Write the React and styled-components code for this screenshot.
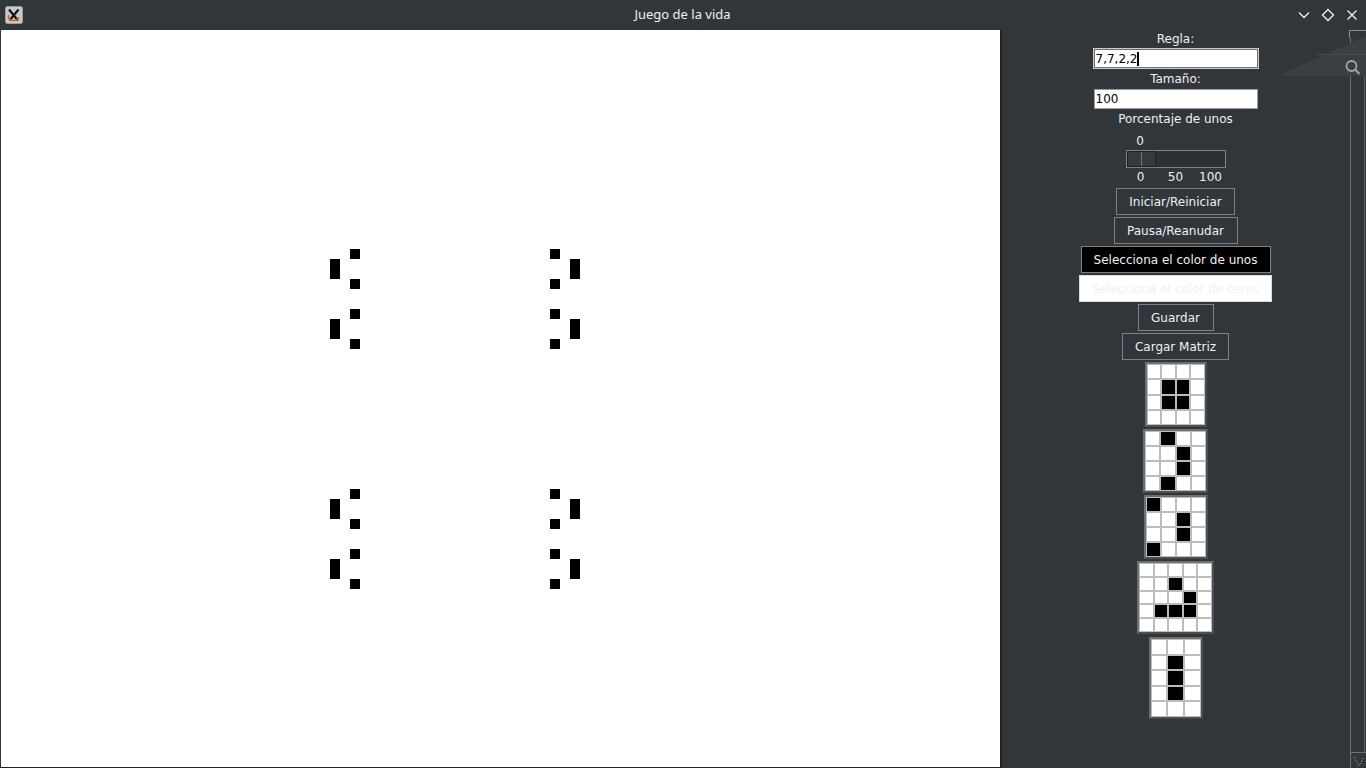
import React from 'react';
import styled, { createGlobalStyle } from 'styled-components';

const GlobalStyle = createGlobalStyle`
  html, body { margin: 0; padding: 0; background: #31363b; overflow: hidden; }
  #root { width: 1366px; height: 768px; }
`;

const Window = styled.div`
  width: 1366px;
  height: 768px;
  display: flex;
  flex-direction: column;
  background: #31363b;
`;

const TitleBar = styled.div`
  height: 30px;
  display: grid;
  grid-template-columns: 1fr auto 1fr;
  align-items: center;
  padding: 0 6px 1px 5px;
  box-sizing: border-box;
`;

const Title = styled.div`
  font-family: "Noto Sans", sans-serif;
  font-size: 13px;
  line-height: 16px;
  margin-bottom: 2px;
  color: #eff0f1;
`;

const Controls = styled.div`
  display: flex;
  justify-content: flex-end;
  gap: 8px;
`;

const CtrlBtn = styled.div`
  width: 16px;
  height: 16px;
  display: flex;
  align-items: center;
  justify-content: center;
`;

const Body = styled.div`
  position: relative;
  flex: 1;
  display: flex;
  min-height: 0;
`;

const CanvasWrap = styled.div`
  margin-left: 1px;
  width: 999px;
  height: 737px;
  background: #ffffff;
  border-right: 2px solid #1f2326;
  border-bottom: 1px solid #1f2326;
`;

const Panel = styled.div`
  width: 347px;
  display: flex;
  flex-direction: column;
  align-items: center;
  font-family: "DejaVu Sans", sans-serif;
  font-size: 12px;
  color: #eff0f1;
`;

const Label = styled.div`
  height: ${p => p.h || 18}px;
  line-height: ${p => p.h || 18}px;
  margin-top: ${p => p.mt || 0}px;
  text-align: center;
`;

const Entry = styled.div`
  box-sizing: border-box;
  width: ${p => p.w}px;
  height: ${p => p.h}px;
  margin-top: ${p => p.mt || 0}px;
  background: #ffffff;
  border: 1px solid ${p => (p.focus ? '#c9cbcd' : '#9a9ea2')};
  box-shadow: ${p => (p.focus ? 'inset 0 0 0 1px #6b7075' : 'none')};
  color: #000;
  padding-left: ${p => (p.focus ? 2 : 1)}px;
  display: flex;
  align-items: center;
`;

const Caret = styled.span`
  display: inline-block;
  width: 2px;
  height: 14px;
  background: #000;
`;

const Scale = styled.div`
  width: 100px;
  margin-top: 5px;
  display: flex;
  flex-direction: column;
`;

const ScaleValue = styled.div`
  height: 17px;
  line-height: 17px;
  width: 29px;
  text-align: center;
`;

const Trough = styled.div`
  box-sizing: border-box;
  height: 18px;
  border: 1px solid #7c8186;
  background: #2d3136;
  display: flex;
`;

const Handle = styled.div`
  box-sizing: border-box;
  width: 29px;
  height: 100%;
  border: 1px solid #1d2023;
  background: #353a3f;
  display: flex;
`;

const HandleHalf = styled.div`
  flex: 1;
  border-right: ${p => (p.divider ? '1px solid #6b7075' : 'none')};
`;

const TickRow = styled.div`
  display: flex;
  gap: 5px;
  height: 17px;
  line-height: 17px;
  margin-top: 1px;
`;

const Tick = styled.span`
  width: 30px;
  text-align: center;
`;

const Button = styled.div`
  box-sizing: border-box;
  width: ${p => p.w}px;
  height: 27px;
  margin-top: ${p => p.mt ?? 2}px;
  border: 1px solid ${p => (p.light ? '#d8dadc' : '#7c8186')};
  background: ${p => (p.dark ? '#000000' : p.light ? '#ffffff' : 'transparent')};
  color: ${p => (p.light ? '#f0f0f0' : '#eff0f1')};
  display: flex;
  align-items: center;
  justify-content: center;
  white-space: nowrap;
`;

const PatternFrame = styled.div`
  box-sizing: border-box;
  width: ${p => p.w}px;
  height: ${p => p.h}px;
  margin-top: ${p => p.mt ?? 2}px;
  border: 2px solid #6b7075;
  border-right-color: #4a4f54;
  border-bottom-color: #4a4f54;
  background: #bcbcbc;
  display: grid;
  grid-template-columns: repeat(${p => p.cols}, 1fr);
  grid-template-rows: repeat(${p => p.rows}, 1fr);
  gap: 2px;
  padding: 1px;
`;

const Cell = styled.div`
  background: ${p => (p.on ? '#000000' : '#ffffff')};
`;

const ScrollBar = styled.div`
  width: 17px;
  display: flex;
  flex-direction: column;
`;

const ScrollCap = styled.div`
  height: 8px;
  border-left: 1px solid #8a8e92;
  border-top: 1px solid #8a8e92;
  box-sizing: border-box;
`;

const ScrollTrack = styled.div`
  flex: 1;
  box-sizing: border-box;
  border-left: 1px solid #6b7075;
  border-right: 1px solid #5a5f64;
  margin-left: 1px;
  margin-right: 1px;
`;

const ScrollEnd = styled.div`
  height: 16px;
  box-sizing: border-box;
  border-top: 1px solid #6b7075;
  border-left: 1px solid #6b7075;
  margin-left: 1px;
  display: flex;
  align-items: center;
  justify-content: center;
`;

const Overlay = styled.svg`
  position: absolute;
  left: 1270px;
  top: 0;
  pointer-events: none;
`;

const patterns = [
  { w: 62, h: 65, rows: 4, cols: 4, on: [[1, 1], [1, 2], [2, 1], [2, 2]], mt: 2 },
  { w: 65, h: 64, rows: 4, cols: 4, on: [[0, 1], [1, 2], [2, 2], [3, 1]] },
  { w: 64, h: 64, rows: 4, cols: 4, on: [[0, 0], [1, 2], [2, 2], [3, 0]] },
  { w: 77, h: 73, rows: 5, cols: 5, on: [[1, 2], [2, 3], [3, 1], [3, 2], [3, 3]] },
  { w: 54, h: 82, rows: 5, cols: 3, on: [[1, 1], [2, 1], [3, 1]], mt: 3 },
];

// page coordinates of live cells (x, y, h)
const baseLeft = [[350, 249, 10], [330, 259, 20], [350, 279, 10], [350, 309, 10], [330, 319, 20], [350, 339, 10]];
const baseRight = [[550, 249, 10], [570, 259, 20], [550, 279, 10], [550, 309, 10], [570, 319, 20], [550, 339, 10]];
const liveCells = [];
[0, 240].forEach(dy => {
  baseLeft.concat(baseRight).forEach(c => liveCells.push([c[0], c[1] + dy, c[2]]));
});

function Pattern({ p }) {
  const cells = [];
  for (let r = 0; r < p.rows; r++) {
    for (let c = 0; c < p.cols; c++) {
      const on = p.on.some(v => v[0] === r && v[1] === c);
      cells.push(<Cell key={r + '-' + c} on={on} />);
    }
  }
  return (
    <PatternFrame w={p.w} h={p.h} rows={p.rows} cols={p.cols} mt={p.mt}>
      {cells}
    </PatternFrame>
  );
}

function AppIcon() {
  return (
    <svg width="18" height="18" viewBox="0 0 18 18">
      <rect x="0.5" y="0.5" width="17" height="17" rx="2" fill="#c9cacb" stroke="#9a9c9e" />
      <path d="M4 3.5 L13 14.5 M13.5 3.5 L4.5 14.5" stroke="#111" strokeWidth="2.2" />
      <path d="M3.5 9 Q3 14 8 14.5 Q12 15 14 11" stroke="#e0601a" strokeWidth="1.6" fill="none" />
    </svg>
  );
}

export default function App() {
  return (
    <Window>
      <GlobalStyle />
      <TitleBar>
        <AppIcon />
        <Title>Juego de la vida</Title>
        <Controls>
          <CtrlBtn>
            <svg width="14" height="14" viewBox="0 0 14 14">
              <path d="M2 4.5 L7 9.5 L12 4.5" stroke="#eff0f1" strokeWidth="1.3" fill="none" />
            </svg>
          </CtrlBtn>
          <CtrlBtn>
            <svg width="14" height="14" viewBox="0 0 14 14">
              <path d="M7 1.5 L12.5 7 L7 12.5 L1.5 7 Z" stroke="#eff0f1" strokeWidth="1.3" fill="none" />
            </svg>
          </CtrlBtn>
          <CtrlBtn>
            <svg width="14" height="14" viewBox="0 0 14 14">
              <path d="M2.5 2.5 L11.5 11.5 M11.5 2.5 L2.5 11.5" stroke="#eff0f1" strokeWidth="1.3" />
            </svg>
          </CtrlBtn>
        </Controls>
      </TitleBar>
      <Body>
        <CanvasWrap>
          <svg width="999" height="737" shapeRendering="crispEdges">
            <g transform="translate(-1,-30)">
              {liveCells.map((c, i) => (
                <rect key={i} x={c[0]} y={c[1]} width="10" height={c[2]} fill="#000" />
              ))}
            </g>
          </svg>
        </CanvasWrap>
        <Panel>
          <Label>Regla:</Label>
          <Entry w={166} h={21} focus>
            7,7,2,2<Caret />
          </Entry>
          <Label h={19} mt={1}>Tamaño:</Label>
          <Entry w={164} h={20}>100</Entry>
          <Label mt={1}>Porcentaje de unos</Label>
          <Scale>
            <ScaleValue>0</ScaleValue>
            <Trough>
              <Handle>
                <HandleHalf divider />
                <HandleHalf />
              </Handle>
            </Trough>
            <TickRow>
              <Tick>0</Tick>
              <Tick>50</Tick>
              <Tick>100</Tick>
            </TickRow>
          </Scale>
          <Button w={119} mt={2}>Iniciar/Reiniciar</Button>
          <Button w={124}>Pausa/Reanudar</Button>
          <Button w={190} dark>Selecciona el color de unos</Button>
          <Button w={193} light>Selecciona el color de ceros</Button>
          <Button w={76}>Guardar</Button>
          <Button w={107}>Cargar Matriz</Button>
          {patterns.map((p, i) => (
            <Pattern key={i} p={p} />
          ))}
        </Panel>
        <ScrollBar>
          <ScrollCap />
          <ScrollTrack />
          <ScrollEnd>
            <svg width="12" height="12" viewBox="0 0 12 12">
              <path d="M1 2 L6 11 L11 2" stroke="#9a9ea2" strokeWidth="1" strokeDasharray="1.5 1.5" fill="none" />
            </svg>
          </ScrollEnd>
        </ScrollBar>
        <Overlay width="96" height="50" viewBox="0 0 96 50">
          <polygon points="7,46 96,6 96,46" fill="#3a3f44" />
          <line x1="47" y1="24.5" x2="96" y2="24.5" stroke="#464b50" strokeWidth="1" />
          <circle cx="81.5" cy="36" r="5" stroke="#a3a7ab" strokeWidth="1.8" fill="none" />
          <path d="M85 39.5 L89.5 44" stroke="#a3a7ab" strokeWidth="2" />
        </Overlay>
      </Body>
    </Window>
  );
}
